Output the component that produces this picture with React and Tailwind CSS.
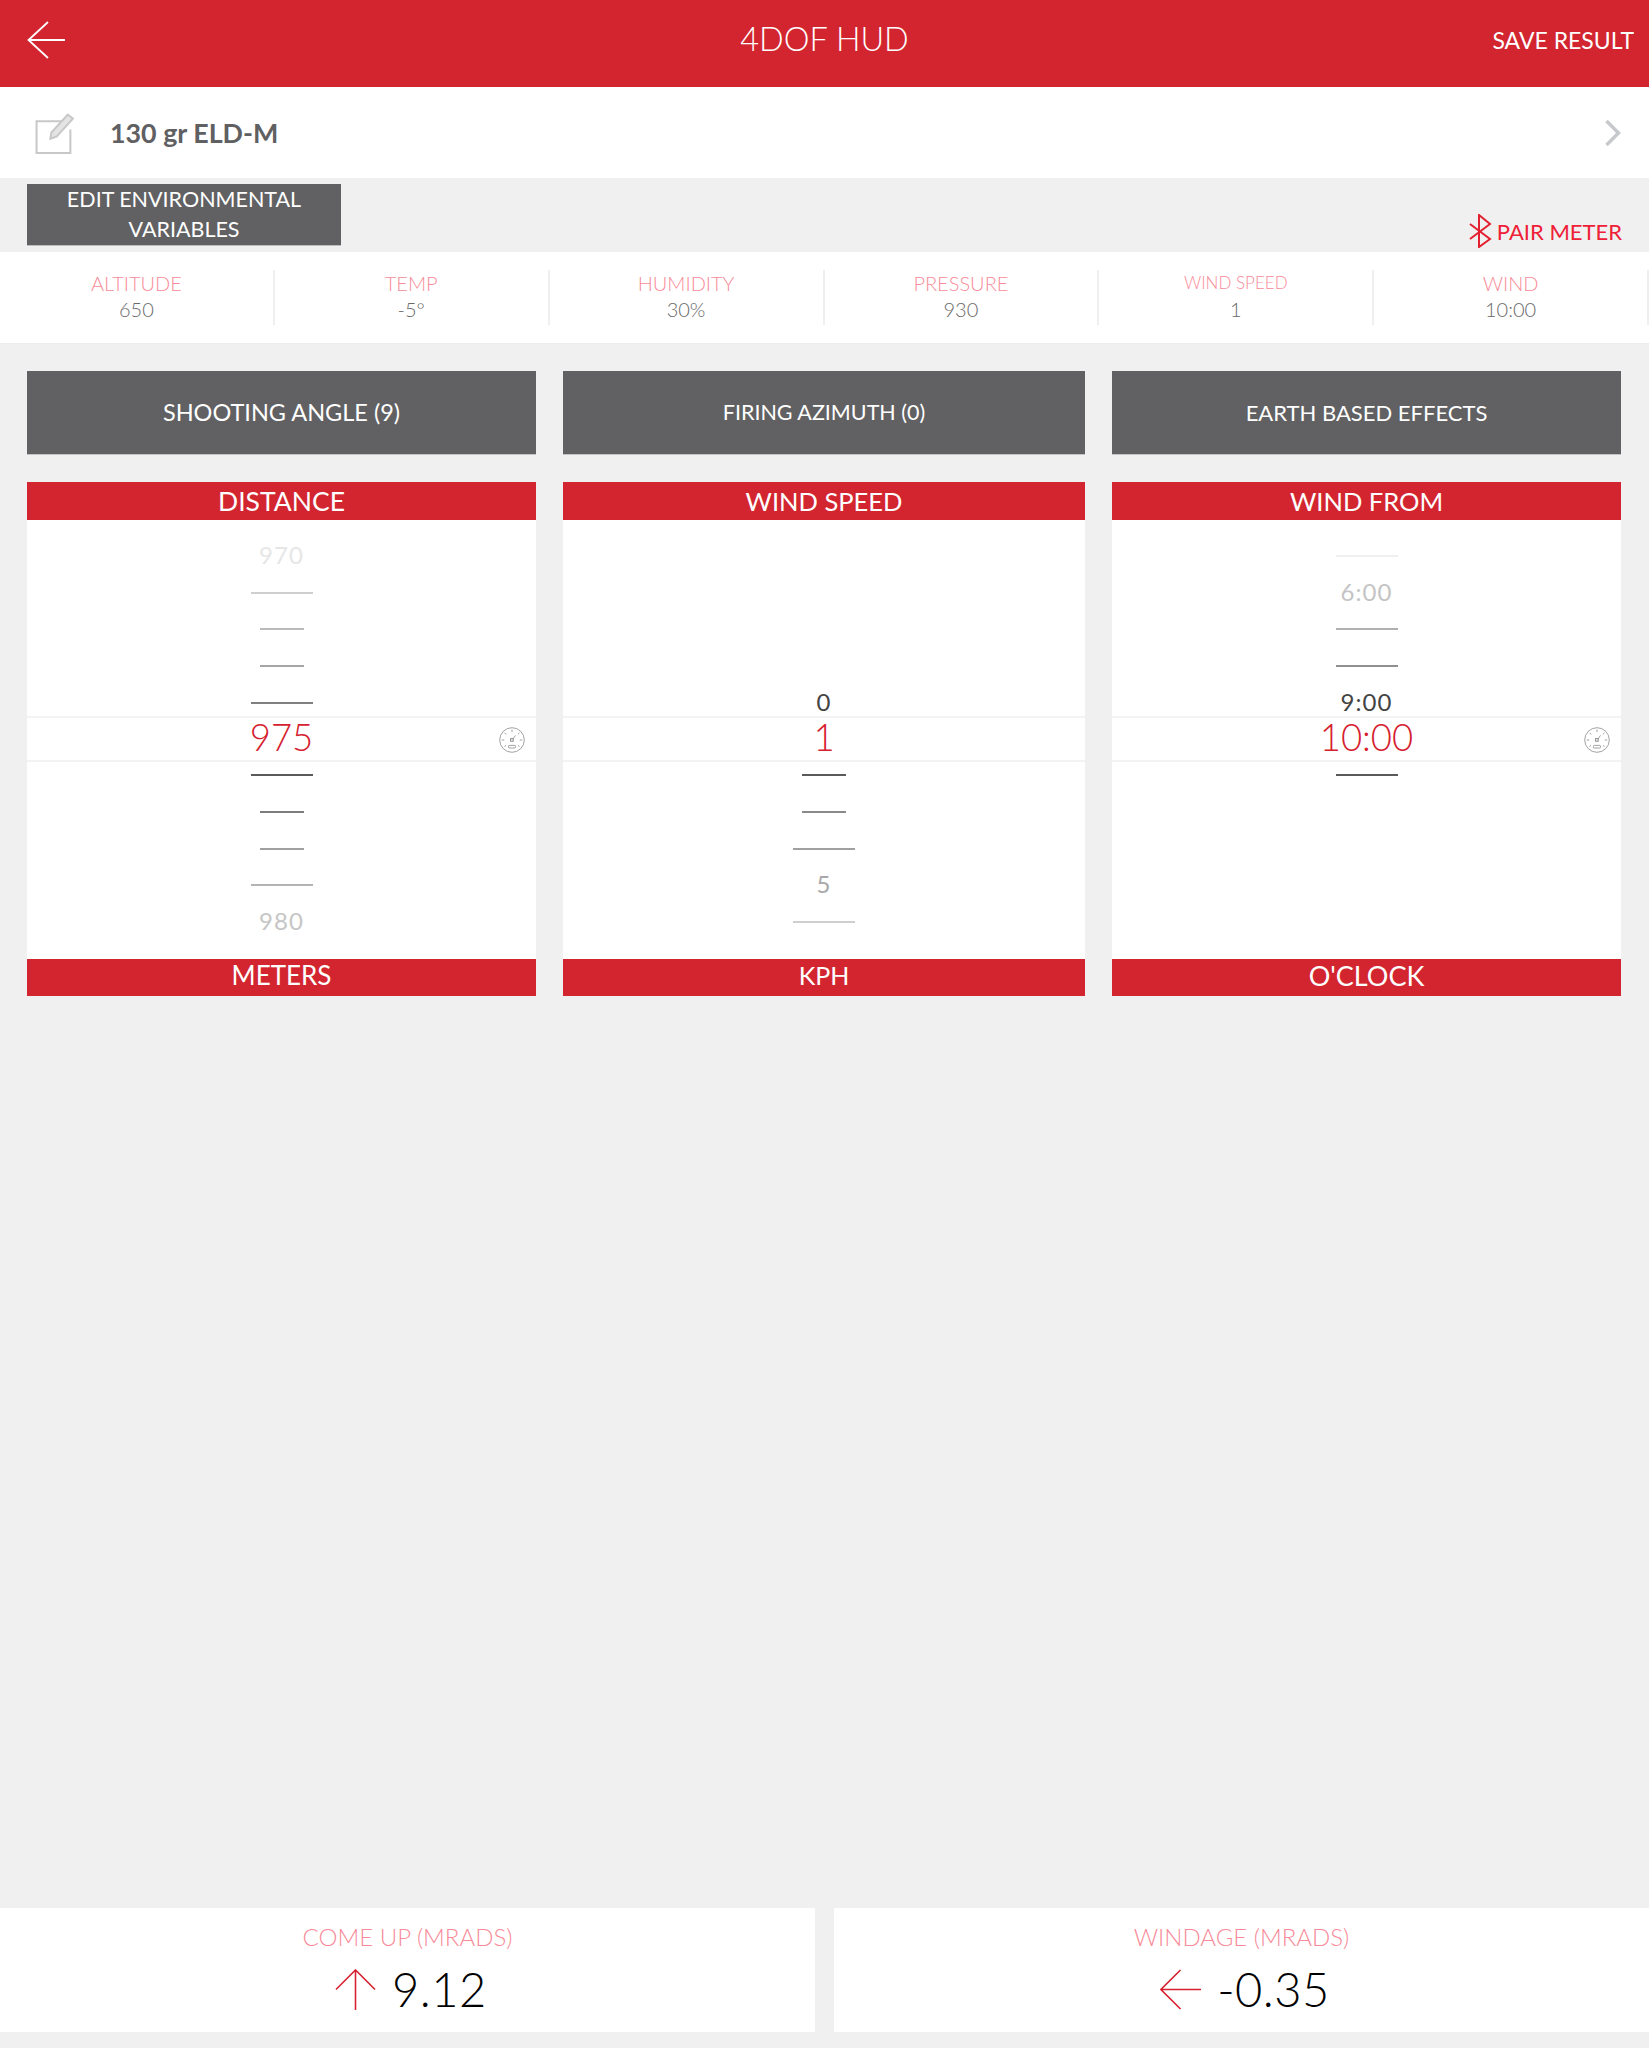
import React from 'react';

const stats = [
  { label: 'ALTITUDE', value: '650' },
  { label: 'TEMP', value: '-5°' },
  { label: 'HUMIDITY', value: '30%' },
  { label: 'PRESSURE', value: '930' },
  { label: 'WIND SPEED', value: '1', small: true },
  { label: 'WIND', value: '10:00' },
];

const Gauge = () => (
  <svg viewBox="0 0 26 26" className="absolute right-[11px] top-[9px] w-[26px] h-[26px]" fill="none" stroke="#8a8a8a" strokeWidth="0.8">
    <circle cx="13" cy="13" r="12.3" />
    <path d="M13 2.5v2.5M5.5 5.8l1.6 1.6M20.5 5.8l-1.6 1.6M2.8 13h2.4M20.8 13h2.4M5.5 19.5l1.6-1.2M20.5 19.5l-1.6-1.2" />
    <rect x="11.6" y="11.6" width="2.6" height="2.6" strokeWidth="1" />
    <path d="M14 11.6l2.6-3.2" />
    <rect x="9.5" y="18.4" width="7" height="2.6" rx="0.8" />
  </svg>
);

// one wheel row: either a tick line or a number
const Row = ({ text, long, color }) => (
  <div className="h-[36.7px] shrink-0 flex items-center justify-center">
    {text ? (
      <span className="pb-[2px] text-[24px] leading-none tracking-[1px] font-normal" style={{ color }}>{text}</span>
    ) : (
      <div className={`h-[2px] ${long ? 'w-[62px]' : 'w-[44px]'}`} style={{ backgroundColor: color }} />
    )}
  </div>
);

const Wheel = ({ title, unit, titleSize, unitSize, selected, gauge, above, below }) => (
  <div className="flex flex-col">
    <div className={`h-[38px] bg-[#d32530] text-white font-normal leading-[38px] text-center ${titleSize}`}>{title}</div>
    <div className="bg-white h-[439px] flex flex-col">
      <div className="h-[201px] shrink-0 flex flex-col justify-end -mb-[5px]">
        {above.map((r, i) => <Row key={i} {...r} />)}
      </div>
      <div className="relative h-[46px] shrink-0 border-y-2 border-[#f3f3f3] flex items-center justify-center pb-[3px] text-[36.5px] leading-none text-[#d6202f]">
        {selected}
        {gauge && <Gauge />}
      </div>
      <div className="flex flex-col -mt-[5px]">
        {below.map((r, i) => <Row key={i} {...r} />)}
      </div>
    </div>
    <div className={`h-[37px] bg-[#d32530] text-white font-normal leading-[33px] text-center ${unitSize}`}>{unit}</div>
  </div>
);

const Result = ({ title, value, arrow }) => (
  <div className="bg-white h-[124px] flex flex-col items-center">
    <div className="mt-[14px] h-[30px] text-[24px] leading-[30px] text-[#f88b99]">{title}</div>
    <div className="mt-[11px] ml-[7px] flex items-center gap-[16px]">
      {arrow}
      <span className="text-[47px] leading-[52px] tracking-[0.5px] text-black">{value}</span>
    </div>
  </div>
);

export default function App() {
  return (
    <div className="min-h-[2048px] flex flex-col bg-[#f0f0f0] [font-family:Lato,sans-serif] font-light">
      {/* Top bar */}
      <div className="h-[87px] bg-[#d32530] flex items-center justify-between pl-[27px] pr-[15px] pb-[7px] relative">
        <svg viewBox="0 0 38 38" className="w-[38px] h-[38px]" fill="none" stroke="#fff" strokeWidth="1.8">
          <path d="M21 1L1.5 19 21 37M1.5 19H38" />
        </svg>
        <div className="absolute inset-x-0 top-[19px] text-center text-[32.5px] leading-[40px] text-white">4DOF HUD</div>
        <div className="text-[23px] leading-[30px] font-normal text-white">SAVE RESULT</div>
      </div>

      {/* Load row */}
      <div className="h-[91px] bg-white flex items-center pl-[35px] pr-[28px]">
        <svg viewBox="0 0 40 41" className="w-[41px] h-[42px]" fill="none" stroke="#c8c8c8" strokeWidth="2">
          <path d="M26 9H1.5v31h33V17" />
          <path d="M15 26l1-6L32 2.5l5 4-16 17.5z" fill="#e4e4e4" />
        </svg>
        <div className="ml-[34px] text-[26.8px] leading-[34px] font-bold text-[#606062]">130 gr ELD-M</div>
        <svg viewBox="0 0 16 26" className="ml-auto w-[16px] h-[26px]" fill="none" stroke="#c6c8cc" strokeWidth="3.5">
          <path d="M1.5 1l12 12-12 12" />
        </svg>
      </div>

      {/* Environment actions */}
      <div className="h-[74px] flex justify-between pl-[27px] pr-[27px] pt-[6px]">
        <div className="w-[314px] h-[62px] bg-[#616163] border-b border-[#bdbdbd] text-white text-center font-normal text-[21.5px] leading-[30px]">
          EDIT ENVIRONMENTAL<br />VARIABLES
        </div>
        <div className="flex items-end gap-[4px] pb-[4px] text-[#ee2037]">
          <svg viewBox="0 0 24 34" className="w-[24px] h-[34px]" fill="none" stroke="#e2202f" strokeWidth="2">
            <path d="M1 10l20 15L10 33V1l11 9L1 25" />
          </svg>
          <div className="text-[22px] leading-[32px] font-normal">PAIR METER</div>
        </div>
      </div>

      {/* Environment stats */}
      <div className="h-[92px] bg-white border-b border-[#ececec] grid grid-cols-6 items-start pt-[18px]">
        {stats.map(s => (
          <div key={s.label} className="h-[55px] border-r-2 border-[#efefef] text-center">
            <div className={`h-[26px] leading-[26px] text-[#f88b99] ${s.small ? 'text-[17px]' : 'text-[20px]'}`}>{s.label}</div>
            <div className="h-[26px] leading-[26px] text-[20px] text-[#6a6a6a]">{s.value}</div>
          </div>
        ))}
      </div>

      {/* Main controls */}
      <div className="px-[27px] pt-[27px] grid grid-cols-[509px_522px_509px] gap-x-[27px]">
        {['SHOOTING ANGLE (9)', 'FIRING AZIMUTH (0)', 'EARTH BASED EFFECTS'].map((b, i) => (
          <div key={b} className={`h-[84px] bg-[#616163] border-b border-[#c4c4c4] flex items-center justify-center font-normal text-white ${i === 0 ? 'text-[23.5px]' : i === 1 ? 'text-[21.5px]' : 'text-[22px]'}`}>
            {b}
          </div>
        ))}
      </div>

      <div className="px-[27px] pt-[27px] grid grid-cols-[509px_522px_509px] gap-x-[27px]">
        <Wheel
          title="DISTANCE"
          unit="METERS"
          titleSize="text-[26.5px]"
          unitSize="text-[26px]"
          selected="975"
          gauge
          above={[
            { text: '970', color: '#e6e6e6' },
            { long: true, color: '#cfcfcf' },
            { color: '#bababa' },
            { color: '#a6a6a6' },
            { long: true, color: '#808080' },
          ]}
          below={[
            { long: true, color: '#5a5a5a' },
            { color: '#7c7c7c' },
            { color: '#a0a0a0' },
            { long: true, color: '#b4b4b4' },
            { text: '980', color: '#c6c6c6' },
          ]}
        />
        <Wheel
          title="WIND SPEED"
          unit="KPH"
          titleSize="text-[25.5px]"
          unitSize="text-[25px]"
          selected="1"
          above={[{ text: '0', color: '#444' }]}
          below={[
            { color: '#5a5a5a' },
            { color: '#8a8a8a' },
            { long: true, color: '#a0a0a0' },
            { text: '5', color: '#a8a8a8' },
            { long: true, color: '#cfcfcf' },
          ]}
        />
        <Wheel
          title="WIND FROM"
          unit="O'CLOCK"
          titleSize="text-[25.5px]"
          unitSize="text-[27px]"
          selected="10:00"
          gauge
          above={[
            { long: true, color: '#efefef' },
            { text: '6:00', color: '#c4c4c4' },
            { long: true, color: '#b0b0b0' },
            { long: true, color: '#909090' },
            { text: '9:00', color: '#444' },
          ]}
          below={[{ long: true, color: '#5a5a5a' }]}
        />
      </div>

      {/* Results */}
      <div className="mt-auto mb-[16px] grid grid-cols-[815px_815px] gap-x-[19px]">
        <Result
          title="COME UP (MRADS)"
          value="9.12"
          arrow={
            <svg viewBox="0 0 42 42" className="w-[41px] h-[41px]" fill="none" stroke="#d6202f" strokeWidth="1.6">
              <path d="M1 21L21 1l20 20M21 1v41" />
            </svg>
          }
        />
        <Result
          title="WINDAGE (MRADS)"
          value="-0.35"
          arrow={
            <svg viewBox="0 0 42 42" className="w-[41px] h-[41px]" fill="none" stroke="#d6202f" strokeWidth="1.6">
              <path d="M21 1L1 21l20 20M1 21h41" />
            </svg>
          }
        />
      </div>
    </div>
  );
}
